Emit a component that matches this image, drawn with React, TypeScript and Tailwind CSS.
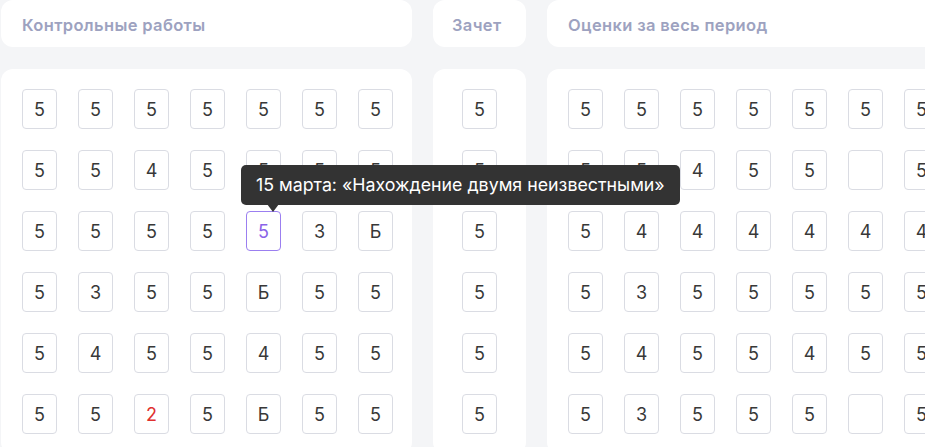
const controlRows = [
  ["5", "5", "5", "5", "5", "5", "5"],
  ["5", "5", "4", "5", "5", "5", "5"],
  ["5", "5", "5", "5", "5", "3", "Б"],
  ["5", "3", "5", "5", "Б", "5", "5"],
  ["5", "4", "5", "5", "4", "5", "5"],
  ["5", "5", "2", "5", "Б", "5", "5"],
];

const periodRows = [
  ["5", "5", "5", "5", "5", "5", "5", "5"],
  ["5", "5", "4", "5", "5", "", "5", "5"],
  ["5", "4", "4", "4", "4", "4", "4", "4"],
  ["5", "3", "5", "5", "5", "5", "5", "5"],
  ["5", "4", "5", "5", "4", "5", "5", "5"],
  ["5", "3", "5", "5", "5", "", "5", "5"],
];

function Mark({ value, active }: { value: string; active?: boolean }) {
  const color = active ? "text-[#8a63e8]" : value === "2" ? "text-[#e0312f]" : "text-[#383838]";
  return (
    <div
      className={`w-[35px] h-[40px] shrink-0 flex items-center justify-center rounded-[4px] border-[1.5px] text-[18px] ${color} ${
        active ? "border-[#9b7ff0]" : "border-[#dadce3]"
      }`}
    >
      {value}
    </div>
  );
}

function Header({ title, className }: { title: string; className: string }) {
  return (
    <div
      className={`h-[47px] pt-[3px] bg-white rounded-[12px] flex items-center text-[16.5px] tracking-[0.35px] font-semibold text-[#9da2c0] ${className}`}
    >
      {title}
    </div>
  );
}

export default function App() {
  return (
    <div
      className="relative w-[925px] h-[447px] overflow-hidden bg-[#f4f5f7] pl-px"
      style={{ fontFamily: "Inter, 'Noto Sans', sans-serif" }}
    >
      <div className="flex gap-[21px] w-max">
        {/* Контрольные работы */}
        <div className="flex flex-col gap-[22px] w-[411px]">
          <Header title="Контрольные работы" className="pl-[21px]" />
          <div className="bg-white rounded-[12px] pt-[20px] pl-[21px] pr-[20px] pb-[20px] flex flex-col gap-[21px]">
            {controlRows.map((row, r) => (
              <div key={r} className="flex gap-[21px]">
                {row.map((v, c) => (
                  <Mark key={c} value={v} active={r === 2 && c === 4} />
                ))}
              </div>
            ))}
          </div>
        </div>

        {/* Зачет */}
        <div className="flex flex-col gap-[22px] w-[93px]">
          <Header title="Зачет" className="pl-[19px]" />
          <div className="bg-white rounded-[12px] pt-[20px] pb-[20px] flex flex-col items-center gap-[21px]">
            {controlRows.map((_, r) => (
              <Mark key={r} value="5" />
            ))}
          </div>
        </div>

        {/* Оценки за весь период */}
        <div className="flex flex-col gap-[22px] w-[520px]">
          <Header title="Оценки за весь период" className="pl-[21px]" />
          <div className="bg-white rounded-[12px] pt-[20px] pl-[21px] pb-[20px] flex flex-col gap-[21px]">
            {periodRows.map((row, r) => (
              <div key={r} className="flex gap-[21px]">
                {row.map((v, c) => (
                  <Mark key={c} value={v} />
                ))}
              </div>
            ))}
          </div>
        </div>
      </div>

      {/* tooltip */}
      <div className="absolute left-[241px] top-[165px]">
        <div className="h-[40px] px-[15px] flex items-center rounded-[5px] bg-[#333333] text-white text-[17.8px] whitespace-nowrap">
          15 марта: «Нахождение двумя неизвестными»
        </div>
        <div className="absolute left-[26px] top-[39px] w-0 h-0 border-l-[6px] border-r-[6px] border-t-[8px] border-l-transparent border-r-transparent border-t-[#333333]" />
      </div>
    </div>
  );
}
